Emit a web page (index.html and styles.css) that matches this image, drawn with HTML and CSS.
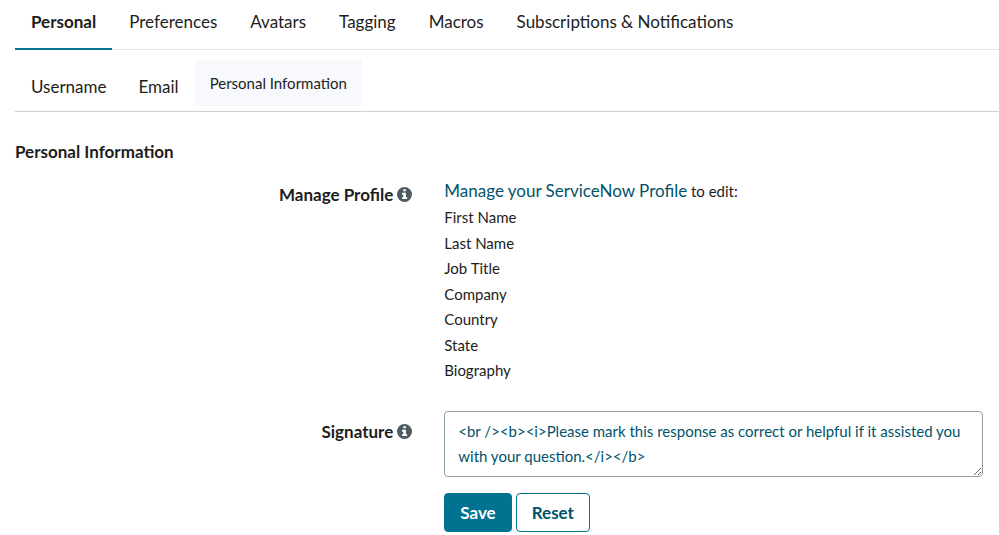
FILE: index.html
```html
<!DOCTYPE html>
<html lang="en">
<head>
    <meta charset="UTF-8">
    <meta name="viewport" content="width=device-width, initial-scale=1.0">
    <title>Personal Information</title>
    <link rel="stylesheet" href="styles.css">
</head>
<body>
    <div class="settings">
        <nav class="tabs">
            <a class="tab active" href="#personal">Personal</a>
            <a class="tab" href="#preferences">Preferences</a>
            <a class="tab" href="#avatars">Avatars</a>
            <a class="tab" href="#tagging">Tagging</a>
            <a class="tab" href="#macros">Macros</a>
            <a class="tab" href="#subscriptions">Subscriptions &amp; Notifications</a>
        </nav>
        <nav class="sub-tabs">
            <a class="sub-tab" href="#username">Username</a>
            <a class="sub-tab" href="#email">Email</a>
            <a class="sub-tab selected" href="#info">Personal Information</a>
        </nav>
        <h3 class="section-title">Personal Information</h3>
        <form class="profile-form">
            <div class="form-row">
                <div class="form-label">
                    <span>Manage Profile</span>
                    <svg class="info-icon" viewBox="0 0 16 16" aria-hidden="true">
                        <circle cx="8" cy="8" r="8" fill="#4f5b62"/>
                        <path d="M6.7 2.3h2.8v2.3H6.7zM5.4 6.2h4.1v4.6h1.3v2H5.4v-2h1.3V8.2H5.4z" fill="#fff"/>
                    </svg>
                </div>
                <div class="form-field">
                    <p class="profile-line"><a class="profile-link" href="#profile">Manage your ServiceNow Profile</a> to edit:</p>
                    <ul class="profile-items">
                        <li>First Name</li>
                        <li>Last Name</li>
                        <li>Job Title</li>
                        <li>Company</li>
                        <li>Country</li>
                        <li>State</li>
                        <li>Biography</li>
                    </ul>
                </div>
            </div>
            <div class="form-row signature-row">
                <div class="form-label">
                    <label for="signature">Signature</label>
                    <svg class="info-icon" viewBox="0 0 16 16" aria-hidden="true">
                        <circle cx="8" cy="8" r="8" fill="#4f5b62"/>
                        <path d="M6.7 2.3h2.8v2.3H6.7zM5.4 6.2h4.1v4.6h1.3v2H5.4v-2h1.3V8.2H5.4z" fill="#fff"/>
                    </svg>
                </div>
                <div class="form-field">
                    <textarea class="signature" id="signature" rows="2" spellcheck="false">&lt;br /&gt;&lt;b&gt;&lt;i&gt;Please mark this response as correct or helpful if it assisted you with your question.&lt;/i&gt;&lt;/b&gt;</textarea>
                    <div class="buttons">
                        <button class="btn btn-primary" type="submit">Save</button>
                        <button class="btn" type="reset">Reset</button>
                    </div>
                </div>
            </div>
        </form>
    </div>
</body>
</html>
```
FILE: styles.css
```css
* {
    margin: 0;
    padding: 0;
    box-sizing: border-box;
}
body {
    font-family: Lato, sans-serif;
    font-size: 15px;
    line-height: 25px;
    background: #fff;
    color: #1d1d1d;
}
.settings {
    padding-left: 15px;
}
/* Tabs */
.tabs {
    display: flex;
    gap: 1px;
    border-bottom: 1px solid #e4e4e4;
}
.tab,
.sub-tab {
    padding: 9px 16px 14px;
    font-size: 17px;
    color: #1d1d1d;
    text-decoration: none;
}
.tab.active {
    margin-bottom: -1px;
    border-bottom: 2px solid #007391;
    font-weight: bold;
}
.sub-tabs {
    display: flex;
    align-items: flex-start;
    padding: 10px 0 5px;
    border-bottom: 1px solid #cfcfcf;
}
.sub-tab {
    padding: 14px 16px 6px;
}
.sub-tab.selected {
    padding: 11px 15px 10px;
    background: #f8f9fc;
    font-size: 15px;
}
.section-title {
    margin-top: 27px;
    font-size: 17px;
    font-weight: bold;
}
/* Profile form */
.form-row {
    display: grid;
    grid-template-columns: 42fr 58fr;
    margin-top: 14px;
}
.form-label {
    display: flex;
    align-items: center;
    justify-content: flex-end;
    align-self: start;
    gap: 4px;
    padding: 4px 16px 0;
    font-size: 17px;
    font-weight: bold;
}
.info-icon {
    width: 15px;
    height: 15px;
}
.form-field {
    padding: 0 16px;
}
.profile-line {
    margin-bottom: 1px;
}
.profile-link {
    font-size: 17px;
    color: #00536b;
    text-decoration: none;
}
.profile-items {
    line-height: 1.7;
    list-style: none;
}
.signature-row {
    margin-top: 27px;
}
.signature-row .form-label {
    padding-top: 8px;
}
.signature {
    display: block;
    width: 100%;
    padding: 7px 13px;
    border: 1px solid #8fa0a6;
    border-radius: 4px;
    font: inherit;
    color: #00536b;
    resize: vertical;
}
/* Buttons */
.buttons {
    display: flex;
    gap: 4px;
    margin-top: 16px;
}
.btn {
    padding: 6px 15px;
    border: 1px solid #00738f;
    border-radius: 4px;
    background: #fff;
    font: bold 17px/25px Lato, sans-serif;
    color: #00536b;
    cursor: pointer;
}
.btn-primary {
    background: #007391;
    color: #fff;
}
```
